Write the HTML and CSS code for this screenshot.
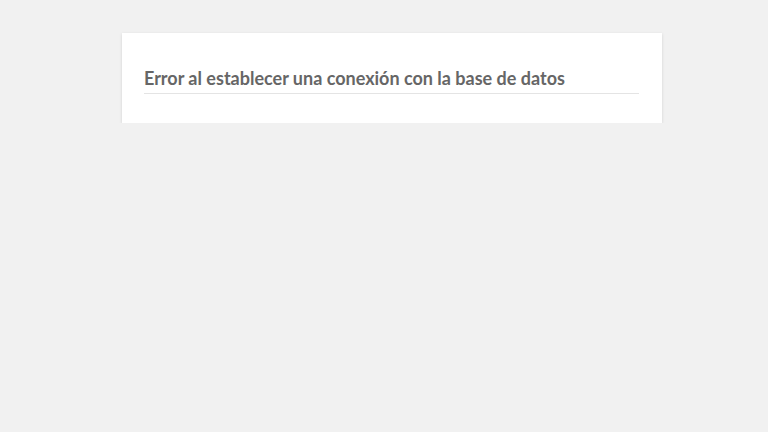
FILE: index.html
```html
<!DOCTYPE html>
<html lang="es">
<head>
<meta charset="utf-8">
<title>Error de WordPress</title>
<link rel="stylesheet" href="styles.css">
</head>
<body>
<div class="card">
<h1 class="title">Error al establecer una conexión con la base de datos</h1>
</div>
</body>
</html>
```
FILE: styles.css
```css
html, body {
  margin: 0;
  padding: 0;
  background: #f1f1f1;
}
body {
  font-family: Lato, "Open Sans", sans-serif;
}
.card {
  box-sizing: border-box;
  width: 540px;
  height: 90px;
  margin: 33px 0 0 122px;
  padding: 33px 23px 0 22px;
  background: #fff;
  box-shadow: 0 1px 3px rgba(0,0,0,0.13);
}
.title {
  margin: 0;
  padding-bottom: 3px;
  border-bottom: 1px solid #e4e4e4;
  font-size: 18px;
  line-height: 24px;
  font-weight: 700;
  color: #666;
}
```
